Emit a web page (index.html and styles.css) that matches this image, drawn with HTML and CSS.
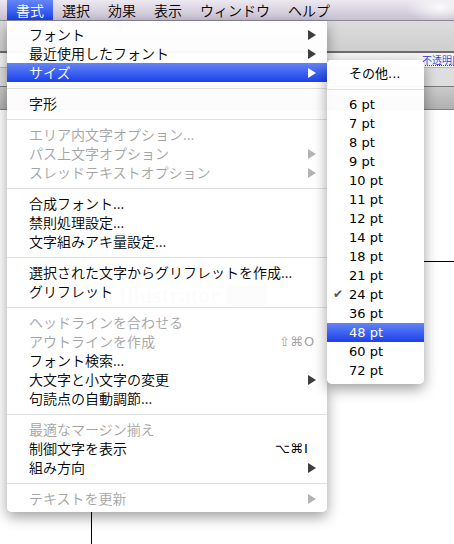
FILE: index.html
```html
<!DOCTYPE html>
<html lang="ja">
<head>
<meta charset="utf-8">
<title>書式メニュー</title>
<link rel="stylesheet" href="styles.css">
</head>
<body>
<div class="screen">
  <div class="menubar">
    <span class="mb-item active">書式</span>
    <span class="mb-item">選択</span>
    <span class="mb-item">効果</span>
    <span class="mb-item">表示</span>
    <span class="mb-item">ウィンドウ</span>
    <span class="mb-item">ヘルプ</span>
  </div>
  <div class="app">
    <div class="toolbar"></div>
    <div class="control"><span class="opacity-link">不透明度</span></div>
    <div class="panel-a"></div>
    <div class="panel-b"></div>
    <div class="canvas">
      <div class="hline"></div>
      <div class="splash"><span class="splash-name">Illustrator</span><span class="splash-box"></span></div>
      <div class="vline"></div>
    </div>
  </div>

  <div class="menu main">
    <div class="item"><span class="label">フォント</span><span class="arrow"></span></div>
    <div class="item"><span class="label">最近使用したフォント</span><span class="arrow"></span></div>
    <div class="item hl"><span class="label">サイズ</span><span class="arrow"></span></div>
    <div class="sep"></div>
    <div class="item"><span class="label">字形</span></div>
    <div class="sep"></div>
    <div class="item disabled"><span class="label">エリア内文字オプション...</span></div>
    <div class="item disabled"><span class="label">パス上文字オプション</span><span class="arrow"></span></div>
    <div class="item disabled"><span class="label">スレッドテキストオプション</span><span class="arrow"></span></div>
    <div class="sep"></div>
    <div class="item"><span class="label">合成フォント...</span></div>
    <div class="item"><span class="label">禁則処理設定...</span></div>
    <div class="item"><span class="label">文字組みアキ量設定...</span></div>
    <div class="sep"></div>
    <div class="item"><span class="label">選択された文字からグリフレットを作成...</span></div>
    <div class="item"><span class="label">グリフレット</span></div>
    <div class="sep"></div>
    <div class="item disabled"><span class="label">ヘッドラインを合わせる</span></div>
    <div class="item disabled"><span class="label">アウトラインを作成</span><span class="kbd"><span class="mods">⇧⌘</span><span class="key">O</span></span></div>
    <div class="item"><span class="label">フォント検索...</span></div>
    <div class="item"><span class="label">大文字と小文字の変更</span><span class="arrow"></span></div>
    <div class="item"><span class="label">句読点の自動調節...</span></div>
    <div class="sep"></div>
    <div class="item disabled"><span class="label">最適なマージン揃え</span></div>
    <div class="item"><span class="label">制御文字を表示</span><span class="kbd"><span class="mods">⌥⌘</span><span class="key">I</span></span></div>
    <div class="item"><span class="label">組み方向</span><span class="arrow"></span></div>
    <div class="sep"></div>
    <div class="item disabled"><span class="label">テキストを更新</span><span class="arrow"></span></div>
  </div>

  <div class="menu sub">
    <div class="item"><span class="label">その他...</span></div>
    <div class="sep"></div>
    <div class="item"><span class="label">6 pt</span></div>
    <div class="item"><span class="label">7 pt</span></div>
    <div class="item"><span class="label">8 pt</span></div>
    <div class="item"><span class="label">9 pt</span></div>
    <div class="item"><span class="label">10 pt</span></div>
    <div class="item"><span class="label">11 pt</span></div>
    <div class="item"><span class="label">12 pt</span></div>
    <div class="item"><span class="label">14 pt</span></div>
    <div class="item"><span class="label">18 pt</span></div>
    <div class="item"><span class="label">21 pt</span></div>
    <div class="item"><span class="check">✔</span><span class="label">24 pt</span></div>
    <div class="item"><span class="label">36 pt</span></div>
    <div class="item hl"><span class="label">48 pt</span></div>
    <div class="item"><span class="label">60 pt</span></div>
    <div class="item"><span class="label">72 pt</span></div>
  </div>
</div>
</body>
</html>
```

FILE: styles.css
```css
html, body {
  margin: 0;
  padding: 0;
}

body {
  width: 454px;
  height: 544px;
  overflow: hidden;
  background: #ffffff;
  font-family: "Noto Sans CJK JP", "Noto Sans", sans-serif;
  font-weight: 350;
}

.screen {
  position: relative;
  width: 454px;
  height: 544px;
  overflow: hidden;
}

/* ---------- menu bar ---------- */
.menubar {
  height: 21px;
  box-sizing: border-box;
  display: flex;
  padding-left: 7px;
  font-size: 14px;
  line-height: 21px;
  background:
    radial-gradient(ellipse 34px 14px at 440px 8px, rgba(255, 255, 255, 0.85), rgba(255, 255, 255, 0)),
    linear-gradient(#ece9f1, #d8d2df 55%, #c8c1d2);
  border-bottom: 1px solid #8d8896;
}

.mb-item {
  padding: 0 9px;
  color: #000000;
  white-space: nowrap;
}

.mb-item.active {
  background: linear-gradient(#6586f7, #1c42ea);
  color: #ffffff;
}

/* ---------- application window behind ---------- */
.app {
  display: flex;
  flex-direction: column;
}

.toolbar {
  height: 30px;
  background: linear-gradient(#dcdcdc, #cfcfcf);
  border-bottom: 2px solid #6c6c6c;
}

.control {
  height: 14px;
  background: #f4f4f4;
  border-bottom: 1px solid #bcbcbc;
  display: flex;
  padding-left: 422px;
  overflow: hidden;
}

.opacity-link {
  font-size: 10px;
  line-height: 13px;
  color: #2c3ad8;
  white-space: nowrap;
  border-bottom: 1px dotted #2c3ad8;
  height: 12px;
}

.panel-a {
  height: 18px;
  background: #dedede;
  border-bottom: 1px solid #7a7a7a;
}

.panel-b {
  height: 22px;
  background: linear-gradient(#cacaca, #b0b0b0);
  border-bottom: 1px solid #808080;
}

.canvas {
  height: 440px;
  background: #ffffff;
  display: flex;
  flex-direction: column;
}

.hline {
  margin: 151px 0 0 424px;
  height: 1px;
  background: #000000;
}

.splash {
  margin: 22px 0 0 118px;
  height: 24px;
  display: flex;
  align-items: center;
  gap: 6px;
  color: #b4b4b4;
}

.splash-name {
  font-family: "Liberation Serif", serif;
  font-weight: bold;
  font-size: 23px;
  line-height: 24px;
}

.splash-box {
  width: 40px;
  height: 19px;
  background: #b4b4b4;
}

.vline {
  margin: 204px 0 0 91px;
  width: 1px;
  height: 40px;
  background: #000000;
}

/* ---------- menus ---------- */
.menu {
  position: absolute;
  box-sizing: border-box;
  padding: 4px 0;
  background: rgba(255, 255, 255, 0.955);
  box-shadow: 0 5px 14px rgba(0, 0, 0, 0.38);
  font-size: 14px;
}

.main {
  left: 7px;
  top: 21px;
  width: 320px;
  border-radius: 0 0 5px 5px;
}

.sub {
  left: 327px;
  top: 60px;
  width: 97px;
  border-radius: 4px 5px 5px 5px;
  font-family: "DejaVu Sans", "Noto Sans CJK JP", sans-serif;
  font-weight: normal;
  font-size: 13px;
}

.item {
  height: 19px;
  line-height: 19px;
  display: flex;
  align-items: center;
  padding: 0 11px 0 22px;
  white-space: nowrap;
  color: #000000;
}

.item .label {
  flex: 1;
}

.item.disabled {
  color: #a4a4a4;
}

.item.hl {
  background: linear-gradient(#6384f6, #1b41ea);
  color: #ffffff;
}

.arrow {
  width: 0;
  height: 0;
  border-left: 8px solid #3d3d3d;
  border-top: 5px solid transparent;
  border-bottom: 5px solid transparent;
}

.disabled .arrow {
  border-left-color: #b4b4b4;
}

.hl .arrow {
  border-left-color: #ffffff;
}

.sep {
  height: 1px;
  margin: 6px 0 5px;
  background: #e0e0e0;
}

.kbd {
  display: flex;
  font-family: "DejaVu Sans", sans-serif;
  font-weight: normal;
  font-size: 13px;
}

.kbd .key {
  width: 12px;
  padding-left: 1px;
}

.check {
  width: 16px;
  margin-left: -16px;
  font-size: 12px;
  color: #555555;
}
```
